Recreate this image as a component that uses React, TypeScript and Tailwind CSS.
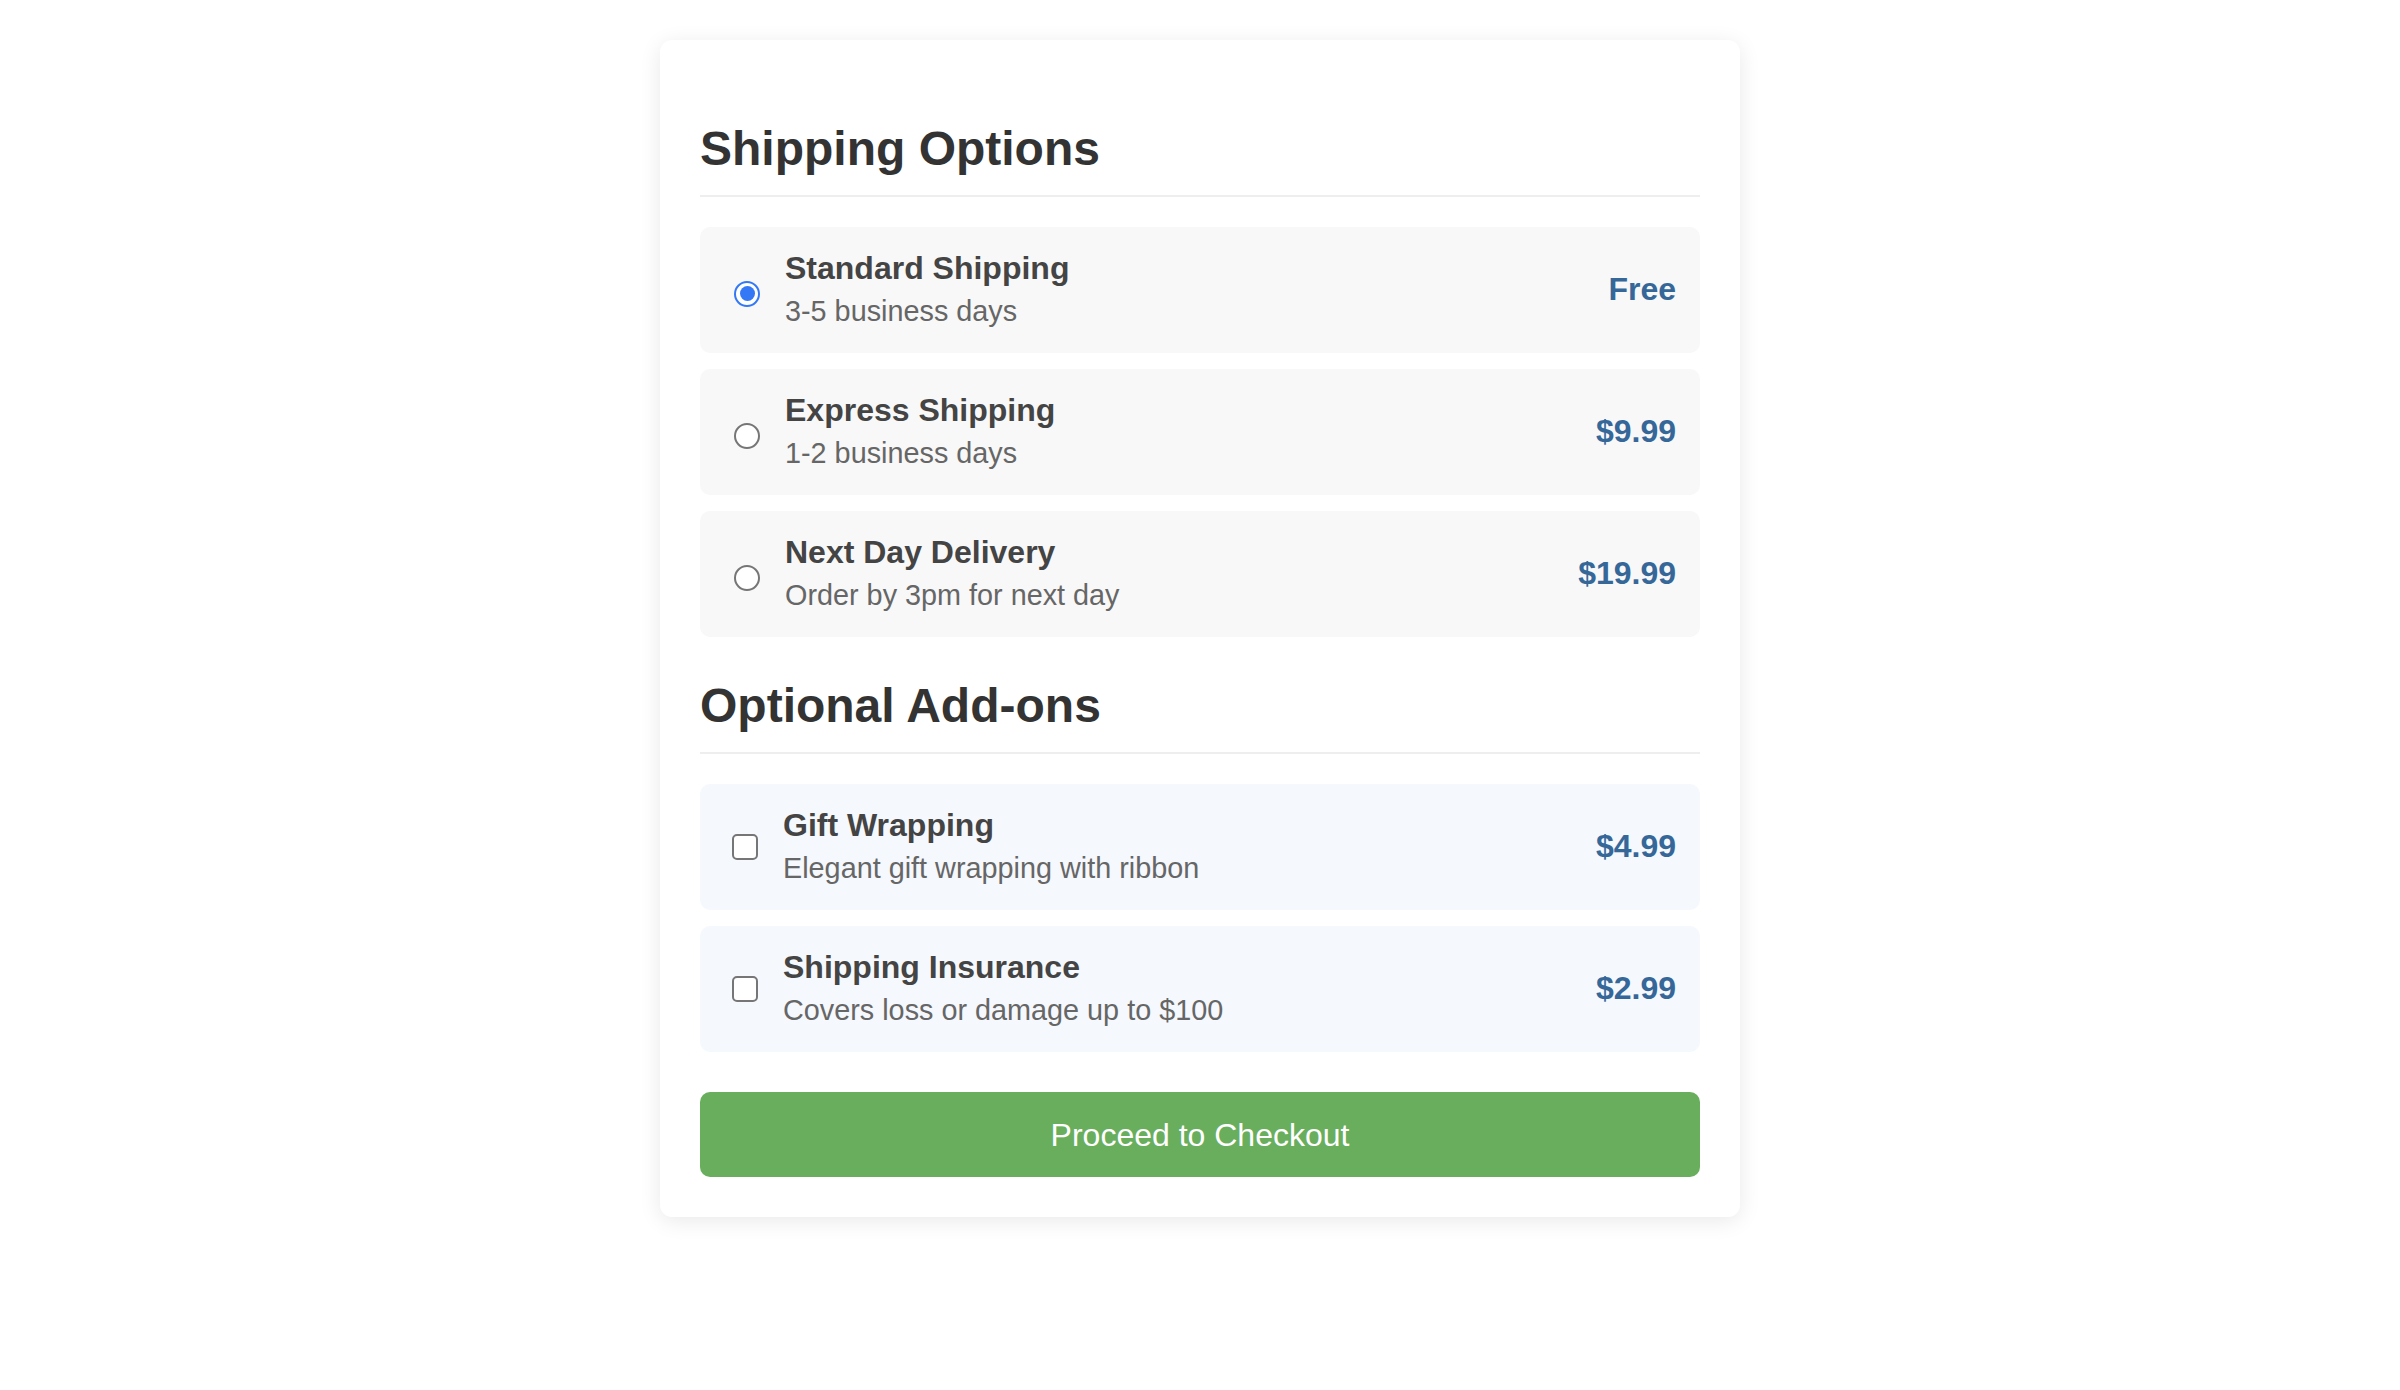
import { useState } from "react";

const shippingOptions = [
    { id: "standard", title: "Standard Shipping", description: "3-5 business days", price: "Free" },
    { id: "express", title: "Express Shipping", description: "1-2 business days", price: "$9.99" },
    { id: "nextday", title: "Next Day Delivery", description: "Order by 3pm for next day", price: "$19.99" },
];

const addOns = [
    { id: "gift", title: "Gift Wrapping", description: "Elegant gift wrapping with ribbon", price: "$4.99" },
    { id: "insurance", title: "Shipping Insurance", description: "Covers loss or damage up to $100", price: "$2.99" },
];

function Radio({ checked }: { checked: boolean }) {
    return checked ? (
        <span className="ml-[10px] mr-[25px] mt-[7px] flex h-[26px] w-[26px] shrink-0 items-center justify-center rounded-full border-[2.5px] border-[#3478f6] bg-white">
            <span className="h-[15px] w-[15px] rounded-full bg-[#3478f6]" />
        </span>
    ) : (
        <span className="ml-[10px] mr-[25px] mt-[7px] h-[26px] w-[26px] shrink-0 rounded-full border-2 border-[#767676] bg-white" />
    );
}

function Checkbox({ checked }: { checked: boolean }) {
    return (
        <span
            className={`ml-[8px] mr-[25px] flex h-[26px] w-[26px] shrink-0 items-center justify-center rounded-[5px] border-2 ${checked ? "border-[#3478f6] bg-[#3478f6]" : "border-[#767676] bg-white"
                }`}
        >
            {checked && (
                <svg className="h-[18px] w-[18px] text-white" fill="none" viewBox="0 0 24 24" stroke="currentColor">
                    <path strokeLinecap="round" strokeLinejoin="round" strokeWidth={3} d="M5 13l4 4L19 7" />
                </svg>
            )}
        </span>
    );
}

function OptionRow({
    title,
    description,
    price,
    tinted,
    control,
    onClick,
}: {
    title: string;
    description: string;
    price: string;
    tinted?: boolean;
    control: React.ReactNode;
    onClick: () => void;
}) {
    return (
        <div
            onClick={onClick}
            className={`flex h-[126px] cursor-pointer items-center rounded-[10px] px-[24px] ${tinted ? "bg-[#f5f8fd]" : "bg-[#f8f8f8]"}`}
        >
            {control}
            <div className="flex-1 pb-[3px]">
                <p className="text-[32px] font-bold leading-[37px] text-[#444]">{title}</p>
                <p className="mt-[8px] text-[28.8px] leading-[32px] text-[#666]">{description}</p>
            </div>
            <span className="mb-[2px] text-[32px] font-bold leading-[37px] text-[#366799]">{price}</span>
        </div>
    );
}

export default function App() {
    const [shipping, setShipping] = useState("standard");
    const [extras, setExtras] = useState<string[]>([]);

    const toggleExtra = (id: string) =>
        setExtras((prev) => (prev.includes(id) ? prev.filter((x) => x !== id) : [...prev, id]));

    return (
        <div className="min-h-screen bg-white pt-[40px] font-['Liberation_Sans',Arial,sans-serif]">
            <div className="mx-auto w-[1080px] rounded-[12px] bg-white px-[40px] pb-[40px] pt-[40px] shadow-[0_4px_22px_rgba(0,0,0,0.09)]">
                {/* Shipping options */}
                <h2 className="mb-[30px] mt-[41px] border-b-2 border-[#eee] pb-[19px] text-[48px] font-bold leading-[55px] text-[#333]">
                    Shipping Options
                </h2>
                <div className="flex flex-col gap-[16px]">
                    {shippingOptions.map((opt) => (
                        <OptionRow
                            key={opt.id}
                            title={opt.title}
                            description={opt.description}
                            price={opt.price}
                            control={<Radio checked={shipping === opt.id} />}
                            onClick={() => setShipping(opt.id)}
                        />
                    ))}
                </div>

                {/* Add-ons */}
                <h2 className="mb-[30px] mt-[41px] border-b-2 border-[#eee] pb-[19px] text-[48px] font-bold leading-[55px] text-[#333]">
                    Optional Add-ons
                </h2>
                <div className="flex flex-col gap-[16px]">
                    {addOns.map((item) => (
                        <OptionRow
                            key={item.id}
                            title={item.title}
                            description={item.description}
                            price={item.price}
                            tinted
                            control={<Checkbox checked={extras.includes(item.id)} />}
                            onClick={() => toggleExtra(item.id)}
                        />
                    ))}
                </div>

                <button className="mt-[40px] h-[85px] w-full rounded-[10px] bg-[#69ae5d] text-[32px] text-white">
                    Proceed to Checkout
                </button>
            </div>
        </div>
    );
}
